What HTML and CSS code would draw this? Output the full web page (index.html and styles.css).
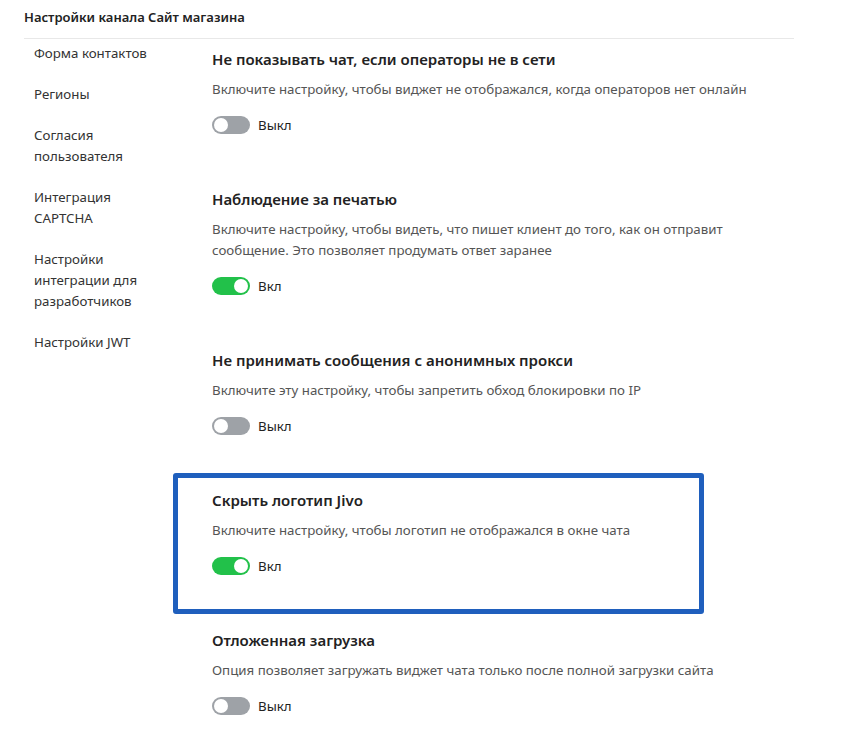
FILE: index.html
```html
<!DOCTYPE html>
<html lang="ru">
<head>
<meta charset="utf-8">
<link rel="stylesheet" href="styles.css">
</head>
<body>
<div class="page">
  <div class="header">Настройки канала Сайт магазина</div>
  <div class="layout">
    <nav class="sidebar">
      <a class="nav-item">Форма контактов</a>
      <a class="nav-item">Регионы</a>
      <a class="nav-item">Согласия пользователя</a>
      <a class="nav-item">Интеграция CAPTCHA</a>
      <a class="nav-item">Настройки интеграции для разработчиков</a>
      <a class="nav-item">Настройки JWT</a>
    </nav>
    <main class="content">
      <section class="setting">
        <h3 class="setting-title">Не показывать чат, если операторы не в сети</h3>
        <p class="setting-desc">Включите настройку, чтобы виджет не отображался, когда операторов нет онлайн</p>
        <label class="toggle-row"><span class="toggle"></span><span class="toggle-label">Выкл</span></label>
      </section>
      <section class="setting">
        <h3 class="setting-title">Наблюдение за печатью</h3>
        <p class="setting-desc">Включите настройку, чтобы видеть, что пишет клиент до того, как он отправит сообщение. Это позволяет продумать ответ заранее</p>
        <label class="toggle-row"><span class="toggle on"></span><span class="toggle-label">Вкл</span></label>
      </section>
      <section class="setting">
        <h3 class="setting-title">Не принимать сообщения с анонимных прокси</h3>
        <p class="setting-desc">Включите эту настройку, чтобы запретить обход блокировки по IP</p>
        <label class="toggle-row"><span class="toggle"></span><span class="toggle-label">Выкл</span></label>
      </section>
      <section class="setting highlight">
        <h3 class="setting-title">Скрыть логотип Jivo</h3>
        <p class="setting-desc">Включите настройку, чтобы логотип не отображался в окне чата</p>
        <label class="toggle-row"><span class="toggle on"></span><span class="toggle-label">Вкл</span></label>
      </section>
      <section class="setting">
        <h3 class="setting-title">Отложенная загрузка</h3>
        <p class="setting-desc">Опция позволяет загружать виджет чата только после полной загрузки сайта</p>
        <label class="toggle-row"><span class="toggle"></span><span class="toggle-label">Выкл</span></label>
      </section>
    </main>
  </div>
</div>
</body>
</html>
```

FILE: styles.css
```css
*, *::before, *::after { box-sizing: border-box; }
html, body { margin: 0; padding: 0; background: #fff; }
body {
  font-family: "Noto Sans", "Open Sans", sans-serif;
  color: #222;
  overflow: hidden;
}
.page {
  width: 770px;
  margin-left: 24px;
}
.header {
  font-size: 13px;
  font-weight: 600;
  line-height: 20px;
  padding-top: 7px;
  padding-bottom: 11px;
  border-bottom: 1px solid #e8e8e8;
  color: #222;
}
.layout {
  display: flex;
}
.sidebar {
  width: 188px;
  flex: none;
  padding-left: 10px;
  padding-right: 53px;
  padding-top: 4px;
  display: flex;
  flex-direction: column;
  gap: 20px;
}
.nav-item {
  font-size: 13.3px;
  line-height: 21px;
  color: #333;
}
.content {
  flex: 1;
  padding-top: 9px;
}
.setting {
  margin-bottom: 53px;
}
.setting-title {
  margin: 0 0 9px;
  font-size: 15px;
  font-weight: 600;
  line-height: 22px;
  color: #222;
}
.setting-desc {
  margin: 0;
  max-width: 550px;
  font-size: 13.3px;
  line-height: 21px;
  color: #555;
}
.toggle-row {
  margin-top: 15px;
  display: flex;
  align-items: center;
  gap: 8px;
  height: 20px;
}
.toggle {
  position: relative;
  width: 38px;
  height: 18px;
  border-radius: 9px;
  background: #9ea2a7;
  flex: none;
}
.toggle::after {
  content: "";
  position: absolute;
  top: 2px;
  left: 2px;
  width: 14px;
  height: 14px;
  border-radius: 50%;
  background: #fff;
}
.toggle.on { background: #22c14a; }
.toggle.on::after { left: 22px; }
.toggle-label {
  font-size: 13.3px;
  line-height: 20px;
  color: #222;
}
.highlight { position: relative; }
.highlight::after {
  content: "";
  position: absolute;
  left: -39px;
  top: -16px;
  width: 531px;
  height: 141px;
  border: 5px solid #1f5fbd;
  border-radius: 3px;
  pointer-events: none;
}
```
